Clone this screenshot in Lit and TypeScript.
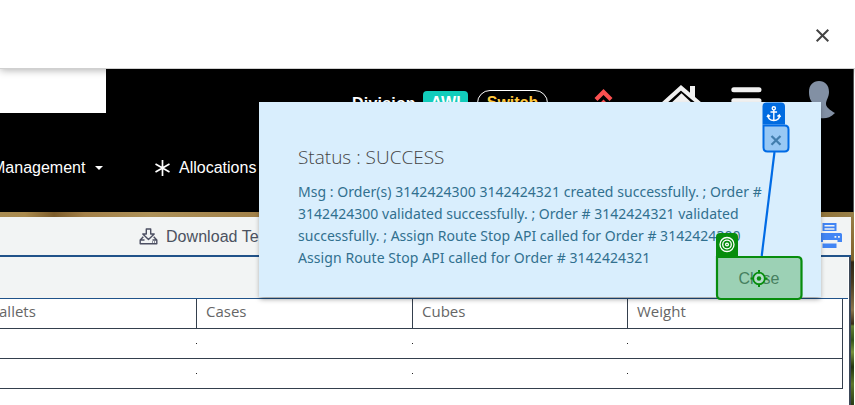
import { LitElement, html, css } from "lit";
import { customElement } from "lit/decorators.js";

@customElement("app-root")
export class AppRoot extends LitElement {
  static styles = css`
    * { box-sizing: border-box; }
    :host {
      display: flex; flex-direction: column; position: relative;
      width: 855px; height: 405px; overflow: hidden; background: #fff;
      font-family: "Liberation Sans", Arial, sans-serif;
    }
    svg { display: block; flex: none; }
    .top {
      flex: none; height: 69px; border-bottom: 1px solid #d0d0d0; background: #fff;
      display: flex; justify-content: flex-end; align-items: center; padding: 2px 25px 0 0;
      z-index: 1; box-shadow: 0 1px 8px rgba(0, 0, 0, .32);
    }
    .head { flex: none; height: 143px; background: #000; display: flex; flex-direction: column; border-right: 1px solid #555; margin-right: 1px; }
    .brand { display: flex; height: 44px; }
    .logo { width: 106px; background: #fff; flex: none; }
    .tools { display: flex; align-items: flex-start; padding-left: 246px; color: #fff; font-weight: bold; font-size: 16px; line-height: 20px; }
    .division { padding-top: 25px; width: 71px; letter-spacing: .2px; }
    .badge { margin-top: 22px; width: 45px; height: 24px; border-radius: 4px; background: #12cdbb; text-align: center; line-height: 23px; }
    .switch { margin: 21px 0 0 9px; width: 71px; height: 26px; border: 1px solid #fff; border-radius: 13px; color: #ffc83d; text-align: center; line-height: 24px; }
    .chev { margin: 19px 0 0 46px; }
    .home { margin: 15px 0 0 48px; }
    .burger { margin: 18px 0 0 29px; }
    .user { margin: 11px 0 0 45px; }
    .nav { display: flex; align-items: center; margin-top: 43px; height: 24px; color: #fff; font-size: 16px; white-space: nowrap; }
    .nav .manage { margin-left: -8px; width: 93px; }
    .caret { margin-left: 10px; border: 4px solid transparent; border-top-color: #fff; border-bottom: 0; }
    .star { margin: 0 8px 0 51px; }
    .body {
      flex: 1; display: flex; align-items: stretch; padding-top: 5px; margin-right: 1px;
      background:
        linear-gradient(to right, #a98c53 0, #aa8a4d 25px, #7c5c2b 54px, #a38049 85px, #ad9159 150px, #a18048 260px, #8f7137 815px, #98804a) 0 0 / 100% 5px no-repeat,
        linear-gradient(#9b8049, #7e622b 48px, #302718 50px, #493b21 70px, #8a744c 98px, #392c1a 112px, #668034 114px, #34531b 128px, #78913d 140px, #23340f 155px, #5d762b 172px, #2a3d16 193px);
    }
    .page { width: 851px; display: flex; flex-direction: column; background: #fff; }
    .bar {
      flex: none; height: 40px; background: #f2f4f4; border-bottom: 2px solid #205289;
      display: flex; align-items: center; padding: 0 8px 0 139px; color: #4c5260; font-size: 16px;
    }
    .bar span { padding-top: 2px; letter-spacing: .05px; }
    .dl { margin: 0 8px 0 0; }
    .print { margin: -3px 0 0 auto; }
    .sheet { flex: 1; border-right: 2px solid #3c4858; padding-right: 1px; }
    .blank { height: 41px; background: #f2f4f4; }
    .table { border-top: 1px solid #205289; padding-right: 5px; }
    .row { display: grid; grid-template-columns: 197px 216px 215px 215px; height: 30px; border-bottom: 1px solid #343f4d; }
    .row > div { border-right: 1px solid #343f4d; padding-left: 9px; font: 15px/25px "Open Sans", "Noto Sans", sans-serif; color: #666; white-space: nowrap; }
    .row > .first { padding: 0; text-indent: -10px; }
    .row.empty > div:not(:last-child) { border-right: 0; display: flex; justify-content: flex-end; padding: 14px 0 0; }
    .row.empty > div:not(:last-child)::after { content: ""; width: 1px; height: 1px; background: #222; }

    .modal {
      position: absolute; z-index: 2; left: 259px; top: 102px; width: 562px; height: 195px;
      background: #d9eefd; box-shadow: 0 3px 5px -1px rgba(0, 0, 0, .4);
      padding: 42px 0 0 39px; color: #31708f; white-space: nowrap;
      font: 14px/22px "Noto Sans", "Open Sans", sans-serif;
    }
    .title { font: 300 19px/26px "Open Sans", "Noto Sans", sans-serif; color: #444; margin-bottom: 11px; }
    .l1 { letter-spacing: .046px; } .l2 { letter-spacing: .03px; } .l3 { letter-spacing: .03px; } .l4 { letter-spacing: .08px; }
    .marks { position: absolute; z-index: 3; left: 0; top: 0; }
    .close { font: 16px "Liberation Sans", Arial, sans-serif; fill: #46805f; }
  `;

  render() {
    return html`
      <div class="top">
        <svg width="15" height="15" viewBox="0 0 15 15"><path d="M1.7 1.7 13.3 13.3M13.3 1.7 1.7 13.3" stroke="#444" stroke-width="2"/></svg>
      </div>
      <div class="head">
        <div class="brand">
          <div class="logo"></div>
          <div class="tools">
            <div class="division">Division</div>
            <div class="badge">AWI</div>
            <div class="switch">Switch</div>
            <svg class="chev" width="20" height="22" viewBox="0 0 20 22"><path d="M2 11.500 9.500 4 17 11.500M2 22 9.500 14.500 17 22" fill="none" stroke="#fb5050" stroke-width="4.200"/></svg>
            <svg class="home" width="40" height="32" viewBox="0 0 40 32"><path d="M28 2h5v12h-5z" fill="#f1f1f1"/><path d="M1.500 19.500 19 3.800 37.500 19.500" fill="none" stroke="#f1f1f1" stroke-width="4.200"/><path d="M5 23 19.500 9.200 34 23v8H5z" fill="#f1f1f1"/></svg>
            <svg class="burger" width="31" height="30" viewBox="0 0 31 30"><path d="M2.800 2.700H28M2.800 13.700H28M2.800 24.700H28" stroke="#f1f1f1" stroke-width="5" stroke-linecap="round"/></svg>
            <svg class="user" width="30" height="40" viewBox="0 0 30 40"><path d="M12 1C18 1 22 5 22 12c0 5-3 8-3 12 0 3 4 6 9 9-5 5-10 6-15 5L1 35c5-5 7-7 6-11C3 21 2 16 2 12 2 5 6 1 12 1z" fill="#8290a4"/></svg>
          </div>
        </div>
        <div class="nav">
          <span class="manage">Management</span><span class="caret"></span>
          <svg class="star" width="17" height="18" viewBox="0 0 17 18"><path d="M8.500 1v16M1.500 4.900l14 8.200M15.500 4.900l-14 8.200" stroke="#fff" stroke-width="1.700"/></svg>
          <span>Allocations</span>
        </div>
      </div>
      <div class="body">
        <div class="page">
          <div class="bar">
            <svg class="dl" width="19" height="17" viewBox="0 0 19 17"><path d="M7.300 1h4.400v5h3.500L9.500 11.500 3.800 6h3.500zM4.300 8.700 1.200 12v3.800h16.600V12l-3.100-3.300M1.200 12h4.300M13.500 12h4.300M13 14h.8M15 14h.8" fill="none" stroke="#4c4f62" stroke-width="1.400" stroke-linejoin="round"/></svg>
            <span>Download Template</span>
            <svg class="print" width="25" height="26" viewBox="0 0 25 26"><path d="M4.500 1h14v8h-14z" fill="#4285f4"/><path d="M6.500 3h10v1.500h-10zM6.500 6.200h10v1.500h-10z" fill="#f2f4f4"/><path d="M1 11h21.500q1.500 0 1.500 1.500V20h-4.500v-2H5v2H0v-8z" fill="#4285f4"/><path d="M16.500 14h1.800v1.800h-1.800zM20 14h1.800v1.800H20z" fill="#f2f4f4"/><path d="M4.500 21.500h14V26h-14z" fill="#4285f4"/></svg>
          </div>
          <div class="sheet">
            <div class="blank"></div>
            <div class="table">
              <div class="row"><div class="first">Pallets</div><div>Cases</div><div>Cubes</div><div>Weight</div></div>
              <div class="row empty"><div></div><div></div><div></div><div></div></div>
              <div class="row empty"><div></div><div></div><div></div><div></div></div>
            </div>
          </div>
        </div>
      </div>
      <div class="modal">
        <div class="title">Status : SUCCESS</div>
        <div class="l1">Msg : Order(s) 3142424300 3142424321 created successfully. ; Order #</div>
        <div class="l2">3142424300 validated successfully. ; Order # 3142424321 validated</div>
        <div class="l3">successfully. ; Assign Route Stop API called for Order # 3142424300</div>
        <div class="l4">Assign Route Stop API called for Order # 3142424321</div>
      </div>
      <svg class="marks" width="855" height="405" viewBox="0 0 855 405">
        <path d="M774.500 152 761.700 256" stroke="#006be5" stroke-width="2.200"/>
        <path d="M762.500 124.500v-18q0-4 4-4h14.500q4 0 4 4v18z" fill="#006be0"/>
        <path d="M763.500 125.500h21q4 0 4 4v18q0 4-4 4h-17q-4 0-4-4z" fill="#98c8f4" stroke="#006be5" stroke-width="2"/>
        <path d="M771.500 136 780.500 144.800M780.500 136 771.500 144.800" stroke="#427eae" stroke-width="2.300"/>
        <g fill="none" stroke="#fff" stroke-width="1.400"><circle cx="773.800" cy="108.300" r="1.600"/><path d="M773.800 110v10.500M770.500 112h6.600M768 115c0 3.500 2.500 5.300 5.800 5.500 3.300-.2 5.800-2 5.800-5.500M767 117l1.200-2 2 1.300M780.600 117l-1.200-2-2 1.300"/></g>
        <path d="M717 257h80.500q4 0 4 4v34q0 4-4 4H721q-4 0-4-4z" fill="#9cd1b5" stroke="#078d0d" stroke-width="2.200"/>
        <path d="M716 256v-19q0-4 4-4h14q4 0 4 4v19z" fill="#078d0d"/>
        <g fill="none" stroke="#fff" stroke-width="1.300"><circle cx="727" cy="244.500" r="7"/><circle cx="727" cy="244.500" r="4.300"/><circle cx="727" cy="244.500" r="1.400"/></g>
        <text class="close" x="738.500" y="284">Close</text>
        <circle cx="759" cy="278.500" r="5.800" fill="#b5dcc9" stroke="#078d0d" stroke-width="1.800"/><circle cx="759" cy="278.500" r="2.200" fill="#078d0d"/>
        <path d="M759 270v3.500M759 283.500v3.500M750.500 278.500h3.500M764 278.500h3.500" stroke="#078d0d" stroke-width="2"/>
      </svg>
    `;
  }
}
